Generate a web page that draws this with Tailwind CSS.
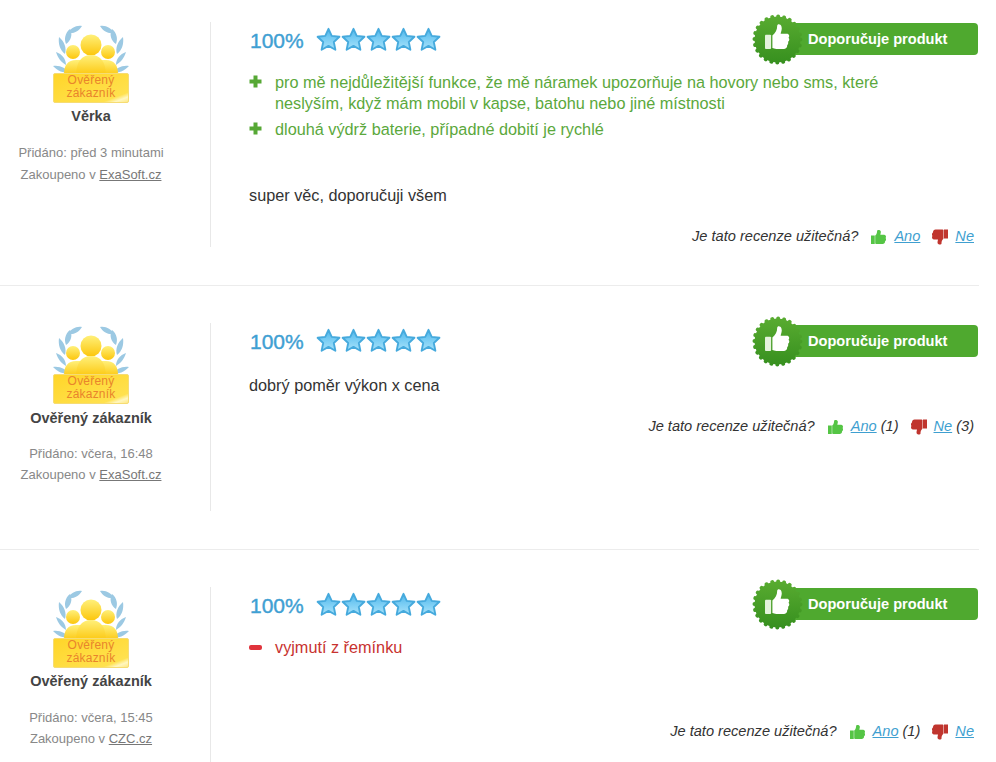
<!DOCTYPE html>
<html lang="cs">
<head>
    <meta charset="UTF-8">
    <meta name="viewport" content="width=device-width, initial-scale=1.0">
    <title>Recenze</title>
    <script src="https://cdn.jsdelivr.net/npm/@tailwindcss/browser@4"></script>
</head>
<body class="bg-white text-[#333] font-['Liberation_Sans',Arial,sans-serif] h-[762px] overflow-hidden">
    <!-- shared icons -->
    <svg class="absolute w-0 h-0" width="0" height="0">
        <defs>
            <linearGradient id="star-fill" x1="0" y1="0" x2="0" y2="1"><stop offset="0" stop-color="#4fb6ea"/><stop offset="0.55" stop-color="#7fd0f5"/><stop offset="1" stop-color="#a9e2fa"/></linearGradient>
            <linearGradient id="seal-fill" x1="0" y1="0" x2="0" y2="1"><stop offset="0" stop-color="#58ab30"/><stop offset="1" stop-color="#37901f"/></linearGradient>
            <linearGradient id="people-fill" x1="0" y1="0" x2="0" y2="1"><stop offset="0" stop-color="#fff07a"/><stop offset="1" stop-color="#fcc60c"/></linearGradient>
            <linearGradient id="plate-fill" x1="0" y1="0" x2="1" y2="1"><stop offset="0" stop-color="#ffd528"/><stop offset="0.82" stop-color="#ffe14e"/><stop offset="0.9" stop-color="#fff6c0"/><stop offset="1" stop-color="#ffe77a"/></linearGradient>
            <symbol id="star" viewBox="0.5 0.5 24 24">
                <polygon points="12.5,2.2 15.6,9 23,9.9 17.6,14.9 19.1,22.3 12.5,18.6 5.9,22.3 7.4,14.9 2,9.9 9.4,9" fill="url(#star-fill)" stroke="#46aadd" stroke-width="1.8" stroke-linejoin="round"/>
            </symbol>
            <symbol id="seal" viewBox="0 0 51 51">
                <circle cx="25.5" cy="25.5" r="23" fill="none" stroke="url(#seal-fill)" stroke-width="4" stroke-linecap="round" stroke-dasharray="0.01 6.01"/>
                <circle cx="25.5" cy="25.5" r="23" fill="url(#seal-fill)"/>
                <g transform="translate(1.7 -1.6) scale(.87 .89)">
                    <rect x="13" y="25" width="7" height="16" rx="1" fill="#e4f2dc"/>
                    <path d="M21.500 26C25 23 27 20 27 15C27 12.500 31 12.500 32 16C33 19 31 22 31 24L38 24C41 24 41.500 27 40 28.500C41.500 30 41 32 39.500 33C40 34.500 39.500 36 38.500 37C38.500 39.500 37.500 41 35 41L26 41C24 41 23 40 21.500 40Z" fill="#fff"/>
                </g>
            </symbol>
            <symbol id="hand-up" viewBox="0 0 16 16">
                <path d="M0 6.500H4V15.500H0ZM4.500 6.500C6 5 6.500 3.500 6.500 1.500C6.500 0 10.500 0 10.500 2.500C10.500 4 10 5 10 5.500H14C16 5.500 16.500 8 15.500 9C16.500 10 16 12 15 12.500C15.200 14 14 15.500 12.500 15.500H6C5 15.500 4.500 15 4.500 15Z"/>
            </symbol>
            <symbol id="hand-down" viewBox="0 0 16 16">
                <path d="M16 9.500H12V0.500H16ZM11.500 9.500C10 11 9.500 12.500 9.500 14.500C9.500 16 5.500 16 5.500 13.500C5.500 12 6 11 6 10.500H2C0 10.500 -0.500 8 0.500 7C-0.500 6 0 4 1 3.500C0.800 2 2 0.500 3.500 0.500H10C11 0.500 11.500 1 11.500 1Z"/>
            </symbol>
            <symbol id="customer" viewBox="0 0 78 80">
                <g fill="#9cc9e3">
                    <path d="M4 28C6 34 9 38 14 41C14 35 10 30 4 28ZM1 42C6 47 11 49 17 49C14 44 8 41 1 42ZM7 13C6 20 8 26 13 30C15 24 12 17 7 13ZM18 5C13 9 12 15 14 20C19 17 21 10 18 5ZM30 2C24 1 19 4 16 9C22 10 27 7 30 2ZM10 57C13 57 17 56 20 53C16 52 12 53 10 57Z"/>
                    <path d="M74 28C72 34 69 38 64 41C64 35 68 30 74 28ZM77 42C72 47 67 49 61 49C64 44 70 41 77 42ZM71 13C72 20 70 26 65 30C63 24 66 17 71 13ZM60 5C65 9 66 15 64 20C59 17 57 10 60 5ZM48 2C54 1 59 4 62 9C56 10 51 7 48 2ZM68 57C65 57 61 56 58 53C62 52 66 53 68 57Z"/>
                </g>
                <g fill="url(#people-fill)">
                    <circle cx="21" cy="28" r="7"/>
                    <circle cx="56" cy="28" r="7"/>
                    <circle cx="39" cy="21" r="10.500"/>
                    <path d="M12 50C12 41 16 36 24 36L54 36C62 36 66 41 66 50L66 52L12 52Z"/>
                    <path d="M24 52C24 37 30 31 39 31C48 31 54 37 54 52Z"/>
                </g>
                <rect x="1.500" y="49.500" width="75" height="29" rx="1.500" fill="url(#plate-fill)" stroke="#f6dc73" stroke-width="1"/>
            </symbol>
        </defs>
    </svg>

    <main class="w-[979px]">
        <!-- review 1 -->
        <article class="flex pt-[22px] pb-[38px] border-b border-[#ececec]">
            <aside class="w-[211px] shrink-0 h-[225px] border-r border-[#e8e8e8]">
                <div class="w-[182px] text-center">
                    <div class="relative w-[78px] h-[80px] mx-auto mt-[2px]">
                        <svg class="w-[78px] h-[80px]"><use href="#customer"/></svg>
                        <div class="absolute left-0 right-0 top-[50px] text-[12px] leading-[13px] tracking-[0.2px] text-[#e9842c]">Ověřený<br>zákazník</div>
                    </div>
                    <div class="mt-[2px] text-[14.5px] leading-[20px] font-bold text-[#444]">Věrka</div>
                    <p class="mt-[16px] text-[13px] leading-[22px] text-[#888]">Přidáno: před 3 minutami</p>
                    <p class="text-[13px] leading-[21px] text-[#888]">Zakoupeno v <a href="#" class="underline text-[#777]">ExaSoft.cz</a></p>
                </div>
            </aside>
            <div class="flex-1 ml-[38px] mr-[1px]">
                <header class="flex justify-between h-[36px]">
                    <div class="flex items-center h-[36px] pb-[2px]">
                        <span class="text-[21px] leading-none text-[#3fa0d3] w-[67px] pl-[1px] pt-[2px] [-webkit-text-stroke:0.4px_#3fa0d3]">100%</span>
                        <span class="flex">
                            <svg class="w-[25px] h-[25px]"><use href="#star"/></svg>
                            <svg class="w-[25px] h-[25px]"><use href="#star"/></svg>
                            <svg class="w-[25px] h-[25px]"><use href="#star"/></svg>
                            <svg class="w-[25px] h-[25px]"><use href="#star"/></svg>
                            <svg class="w-[25px] h-[25px]"><use href="#star"/></svg>
                        </span>
                    </div>
                    <div class="relative w-[226px] h-[51px] -mt-[8px]">
                        <div class="absolute left-[38px] right-0 top-[9px] h-[32px] rounded-[4px] bg-[#4fa92f] pl-[18px] text-[14.6px] leading-[32px] font-bold text-white">Doporučuje produkt</div>
                        <svg class="absolute left-0 top-0 w-[51px] h-[51px]"><use href="#seal"/></svg>
                    </div>
                </header>
                <ul class="mt-[14px] text-[16.25px] leading-[21px] text-[#5ba83c] w-[650px]">
                    <li class="flex">
                        <span class="w-[26px] shrink-0 pt-[3px]"><svg class="w-[13px] h-[13px]" viewBox="0 0 13 13" fill="#56a835"><path d="M4.500 0.500H8.500V4.500H12.500V8.500H8.500V12.500H4.500V8.500H0.500V4.500H4.500Z"/></svg></span>
                        <span>pro mě nejdůležitější funkce, že mě náramek upozorňuje na hovory nebo sms, které neslyším, když mám mobil v kapse, batohu nebo jiné místnosti</span>
                    </li>
                    <li class="flex mt-[5px]">
                        <span class="w-[26px] shrink-0 pt-[3px]"><svg class="w-[13px] h-[13px]" viewBox="0 0 13 13" fill="#56a835"><path d="M4.500 0.500H8.500V4.500H12.500V8.500H8.500V12.500H4.500V8.500H0.500V4.500H4.500Z"/></svg></span>
                        <span>dlouhá výdrž baterie, případné dobití je rychlé</span>
                    </li>
                </ul>
                <p class="mt-[45px] text-[16.25px] leading-[21px] text-[#333]">super věc, doporučuji všem</p>
                <div class="mt-[20px] mr-[4px] flex justify-end items-center text-[14.6px] leading-[21px] italic text-[#333]">
                    <span>Je tato recenze užitečná?</span>
                    <svg class="w-[15px] h-[16px] ml-[13px] mr-[8px] fill-[#55c545]"><use href="#hand-up"/></svg>
                    <a href="#" class="underline text-[#3f9fd0]">Ano</a>
                    <svg class="w-[16px] h-[16px] ml-[12px] mr-[7px] fill-[#c0352e]"><use href="#hand-down"/></svg>
                    <a href="#" class="underline text-[#3f9fd0]">Ne</a>
                </div>
            </div>
        </article>

        <!-- review 2 -->
        <article class="flex pt-[37px] pb-[38px] border-b border-[#ececec]">
            <aside class="w-[211px] shrink-0 h-[188px] border-r border-[#e8e8e8]">
                <div class="w-[182px] text-center">
                    <div class="relative w-[78px] h-[80px] mx-auto mt-[2px]">
                        <svg class="w-[78px] h-[80px]"><use href="#customer"/></svg>
                        <div class="absolute left-0 right-0 top-[50px] text-[12px] leading-[13px] tracking-[0.2px] text-[#e9842c]">Ověřený<br>zákazník</div>
                    </div>
                    <div class="mt-[3px] text-[14.5px] leading-[20px] font-bold text-[#444]">Ověřený zákazník</div>
                    <p class="mt-[15px] text-[13px] leading-[21px] text-[#888]">Přidáno: včera, 16:48</p>
                    <p class="text-[13px] leading-[21px] text-[#888]">Zakoupeno v <a href="#" class="underline text-[#777]">ExaSoft.cz</a></p>
                </div>
            </aside>
            <div class="flex-1 ml-[38px] mr-[1px]">
                <header class="flex justify-between h-[36px]">
                    <div class="flex items-center h-[36px] pb-[2px]">
                        <span class="text-[21px] leading-none text-[#3fa0d3] w-[67px] pl-[1px] pt-[2px] [-webkit-text-stroke:0.4px_#3fa0d3]">100%</span>
                        <span class="flex">
                            <svg class="w-[25px] h-[25px]"><use href="#star"/></svg>
                            <svg class="w-[25px] h-[25px]"><use href="#star"/></svg>
                            <svg class="w-[25px] h-[25px]"><use href="#star"/></svg>
                            <svg class="w-[25px] h-[25px]"><use href="#star"/></svg>
                            <svg class="w-[25px] h-[25px]"><use href="#star"/></svg>
                        </span>
                    </div>
                    <div class="relative w-[226px] h-[51px] -mt-[7px]">
                        <div class="absolute left-[38px] right-0 top-[9px] h-[32px] rounded-[4px] bg-[#4fa92f] pl-[18px] text-[14.6px] leading-[32px] font-bold text-white">Doporučuje produkt</div>
                        <svg class="absolute left-0 top-0 w-[51px] h-[51px]"><use href="#seal"/></svg>
                    </div>
                </header>
                <p class="mt-[16px] text-[16.25px] leading-[21px] text-[#333]">dobrý poměr výkon x cena</p>
                <div class="mt-[20px] mr-[4px] flex justify-end items-center text-[14.6px] leading-[21px] italic text-[#333]">
                    <span>Je tato recenze užitečná?</span>
                    <svg class="w-[15px] h-[16px] ml-[13px] mr-[8px] fill-[#55c545]"><use href="#hand-up"/></svg>
                    <a href="#" class="underline text-[#3f9fd0] pr-[4px]">Ano</a><span>(1)</span>
                    <svg class="w-[16px] h-[16px] ml-[12px] mr-[7px] fill-[#c0352e]"><use href="#hand-down"/></svg>
                    <a href="#" class="underline text-[#3f9fd0] pr-[4px]">Ne</a><span>(3)</span>
                </div>
            </div>
        </article>

        <!-- review 3 -->
        <article class="flex pt-[37px]">
            <aside class="w-[211px] shrink-0 h-[176px] border-r border-[#e8e8e8]">
                <div class="w-[182px] text-center">
                    <div class="relative w-[78px] h-[80px] mx-auto mt-[2px]">
                        <svg class="w-[78px] h-[80px]"><use href="#customer"/></svg>
                        <div class="absolute left-0 right-0 top-[50px] text-[12px] leading-[13px] tracking-[0.2px] text-[#e9842c]">Ověřený<br>zákazník</div>
                    </div>
                    <div class="mt-[2px] text-[14.5px] leading-[20px] font-bold text-[#444]">Ověřený zákazník</div>
                    <p class="mt-[16px] text-[13px] leading-[21px] text-[#888]">Přidáno: včera, 15:45</p>
                    <p class="text-[13px] leading-[21px] text-[#888]">Zakoupeno v <a href="#" class="underline text-[#777]">CZC.cz</a></p>
                </div>
            </aside>
            <div class="flex-1 ml-[38px] mr-[1px]">
                <header class="flex justify-between h-[36px]">
                    <div class="flex items-center h-[36px] pb-[2px]">
                        <span class="text-[21px] leading-none text-[#3fa0d3] w-[67px] pl-[1px] pt-[2px] [-webkit-text-stroke:0.4px_#3fa0d3]">100%</span>
                        <span class="flex">
                            <svg class="w-[25px] h-[25px]"><use href="#star"/></svg>
                            <svg class="w-[25px] h-[25px]"><use href="#star"/></svg>
                            <svg class="w-[25px] h-[25px]"><use href="#star"/></svg>
                            <svg class="w-[25px] h-[25px]"><use href="#star"/></svg>
                            <svg class="w-[25px] h-[25px]"><use href="#star"/></svg>
                        </span>
                    </div>
                    <div class="relative w-[226px] h-[51px] -mt-[8px]">
                        <div class="absolute left-[38px] right-0 top-[9px] h-[32px] rounded-[4px] bg-[#4fa92f] pl-[18px] text-[14.6px] leading-[32px] font-bold text-white">Doporučuje produkt</div>
                        <svg class="absolute left-0 top-0 w-[51px] h-[51px]"><use href="#seal"/></svg>
                    </div>
                </header>
                <ul class="mt-[14px] text-[16.25px] leading-[21px] text-[#c8322f]">
                    <li class="flex items-center">
                        <span class="w-[26px] shrink-0"><span class="block w-[13px] h-[5px] rounded-[2px] bg-[#e0333c]"></span></span>
                        <span>vyjmutí z řemínku</span>
                    </li>
                </ul>
                <div class="mt-[63px] mr-[4px] flex justify-end items-center text-[14.6px] leading-[21px] italic text-[#333]">
                    <span>Je tato recenze užitečná?</span>
                    <svg class="w-[15px] h-[16px] ml-[13px] mr-[8px] fill-[#55c545]"><use href="#hand-up"/></svg>
                    <a href="#" class="underline text-[#3f9fd0] pr-[4px]">Ano</a><span>(1)</span>
                    <svg class="w-[16px] h-[16px] ml-[12px] mr-[7px] fill-[#c0352e]"><use href="#hand-down"/></svg>
                    <a href="#" class="underline text-[#3f9fd0]">Ne</a>
                </div>
            </div>
        </article>
    </main>
</body>
</html>
